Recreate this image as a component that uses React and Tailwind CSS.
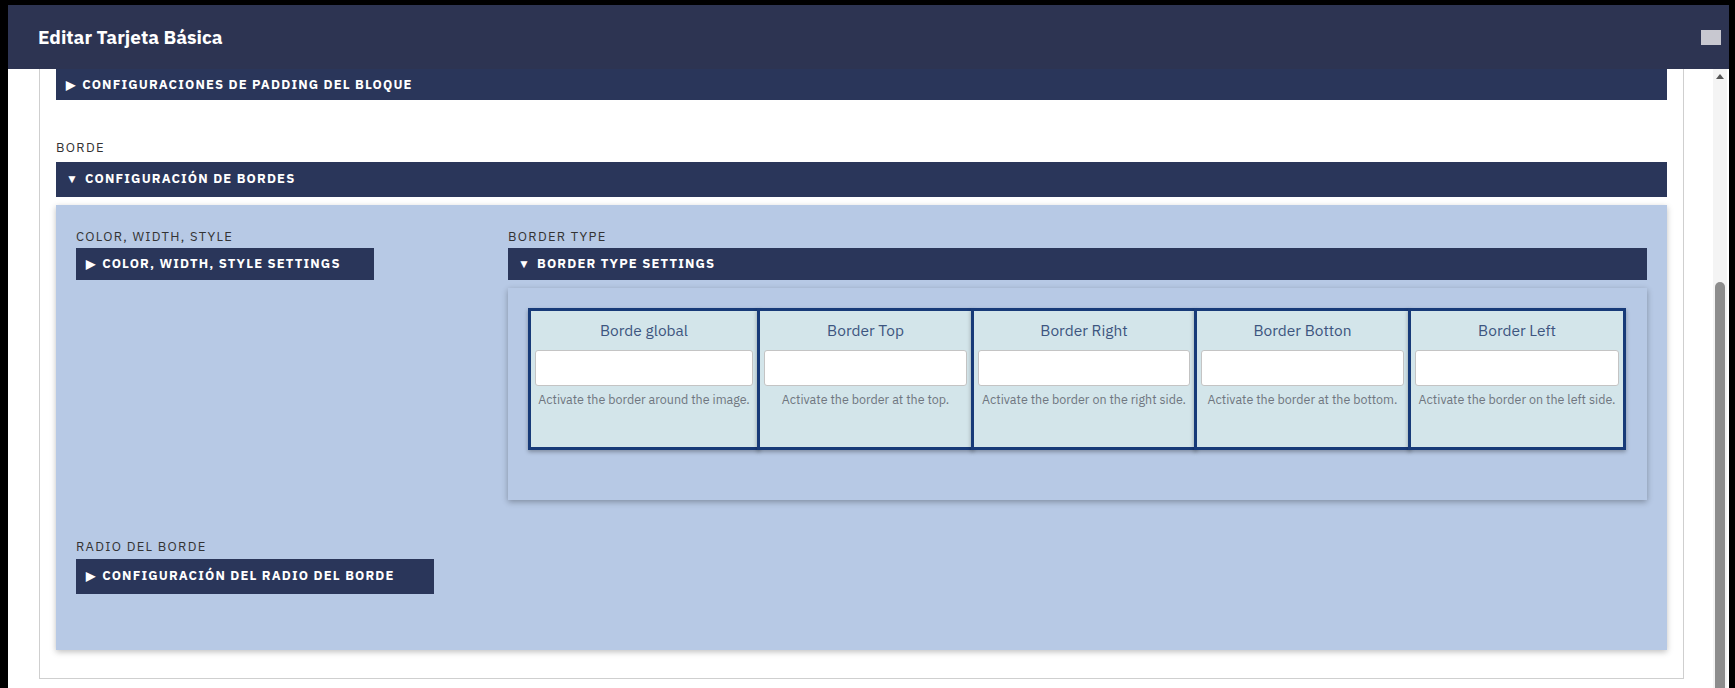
const font = { fontFamily: '"IBM Plex Sans", Roboto, "Liberation Sans", sans-serif' };

function Bar({ open, label, className = "" }) {
  return (
    <div className={`flex items-center bg-[#2a365a] text-white text-[13px] font-bold tracking-[0.09em] uppercase px-[10px] ${className}`}>
      <span className="text-[12px] mr-[6px]">{open ? "▼" : "▶"}</span>
      {label}
    </div>
  );
}

function Label({ children, className = "" }) {
  return <div className={`text-[13px] tracking-[0.1em] text-[#333] uppercase ${className}`}>{children}</div>;
}

const cards = [
  ["Borde global", "Activate the border around the image.", "w-[232px]"],
  ["Border Top", "Activate the border at the top.", "w-[217px]"],
  ["Border Right", "Activate the border on the right side.", "w-[226px]"],
  ["Border Botton", "Activate the border at the bottom.", "w-[217px]"],
  ["Border Left", "Activate the border on the left side.", "w-[218px]"],
];

export default function App() {
  return (
    <div className="w-[1735px] h-[688px] bg-black pt-[5px] pl-[8px] pr-[6px] overflow-hidden" style={font}>
      <div className="h-full bg-white flex flex-col">
        <div className="h-[64px] bg-[#2d3452] flex items-center justify-between pl-[30px] pr-[8px] shrink-0">
          <div className="text-white font-bold text-[19px]">Editar Tarjeta Básica</div>
          <div className="w-[20px] h-[15px] bg-[#c8c8d0]" />
        </div>
        <div className="flex flex-1 min-h-0">
          <div className="flex-1 pl-[31px] pr-[29px]">
            <div className="border-x border-b border-[#cfcfcf] h-[610px] px-[16px]">
              <Bar label="Configuraciones de padding del bloque" className="h-[31px]" />
              <Label className="mt-[38px] mb-[4px]">Borde</Label>
              <Bar open label="Configuración de bordes" className="h-[35px]" />
              <div className="mt-[8px] bg-[#b7c9e5] h-[445px] shadow-[0_2px_6px_rgba(0,0,0,0.25)] px-[20px] pt-[22px] flex flex-col">
                <div className="flex">
                  <div className="w-[432px]">
                    <Label className="mb-[2px]">Color, width, style</Label>
                    <Bar label="Color, width, style settings" className="h-[32px] w-[298px]" />
                  </div>
                  <div className="flex-1">
                    <Label className="mb-[2px]">Border type</Label>
                    <Bar open label="Border type settings" className="h-[32px]" />
                    <div className="mt-[8px] h-[212px] bg-[#b7c9e5] shadow-[0_2px_6px_rgba(0,0,0,0.3)] pt-[20px] px-[20px]">
                      <div className="flex">
                        {cards.map(([t, d, w]) => (
                          <div key={t} className={`${w} h-[142px] bg-[#d3e5ea] border-[3px] border-[#173a78] -ml-[3px] first:ml-0 px-[4px] shadow-[0_2px_4px_rgba(0,0,0,0.3)]`}>
                            <div className="text-center text-[15.5px] text-[#3d5580] mt-[8px]">{t}</div>
                            <div className="h-[36px] bg-white border border-[#c4c4c4] rounded-[3px] mt-[8px]" />
                            <div className="text-center text-[12.5px] text-[#6f7680] mt-[4px] whitespace-nowrap">{d}</div>
                          </div>
                        ))}
                      </div>
                    </div>
                  </div>
                </div>
                <Label className="mt-[37px] mb-[2px]">Radio del borde</Label>
                <Bar label="Configuración del radio del borde" className="h-[35px] w-[358px]" />
              </div>
            </div>
          </div>
          <div className="w-[14px] mr-[2px] bg-[#f4f4f4] relative">
            <div className="absolute top-[5px] left-[3px] w-0 h-0 border-x-[4px] border-x-transparent border-b-[5px] border-b-[#555]" />
            <div className="absolute top-[213px] bottom-0 left-[2px] w-[10px] bg-[#8d8d8d] rounded-t-full" />
          </div>
        </div>
      </div>
    </div>
  );
}
